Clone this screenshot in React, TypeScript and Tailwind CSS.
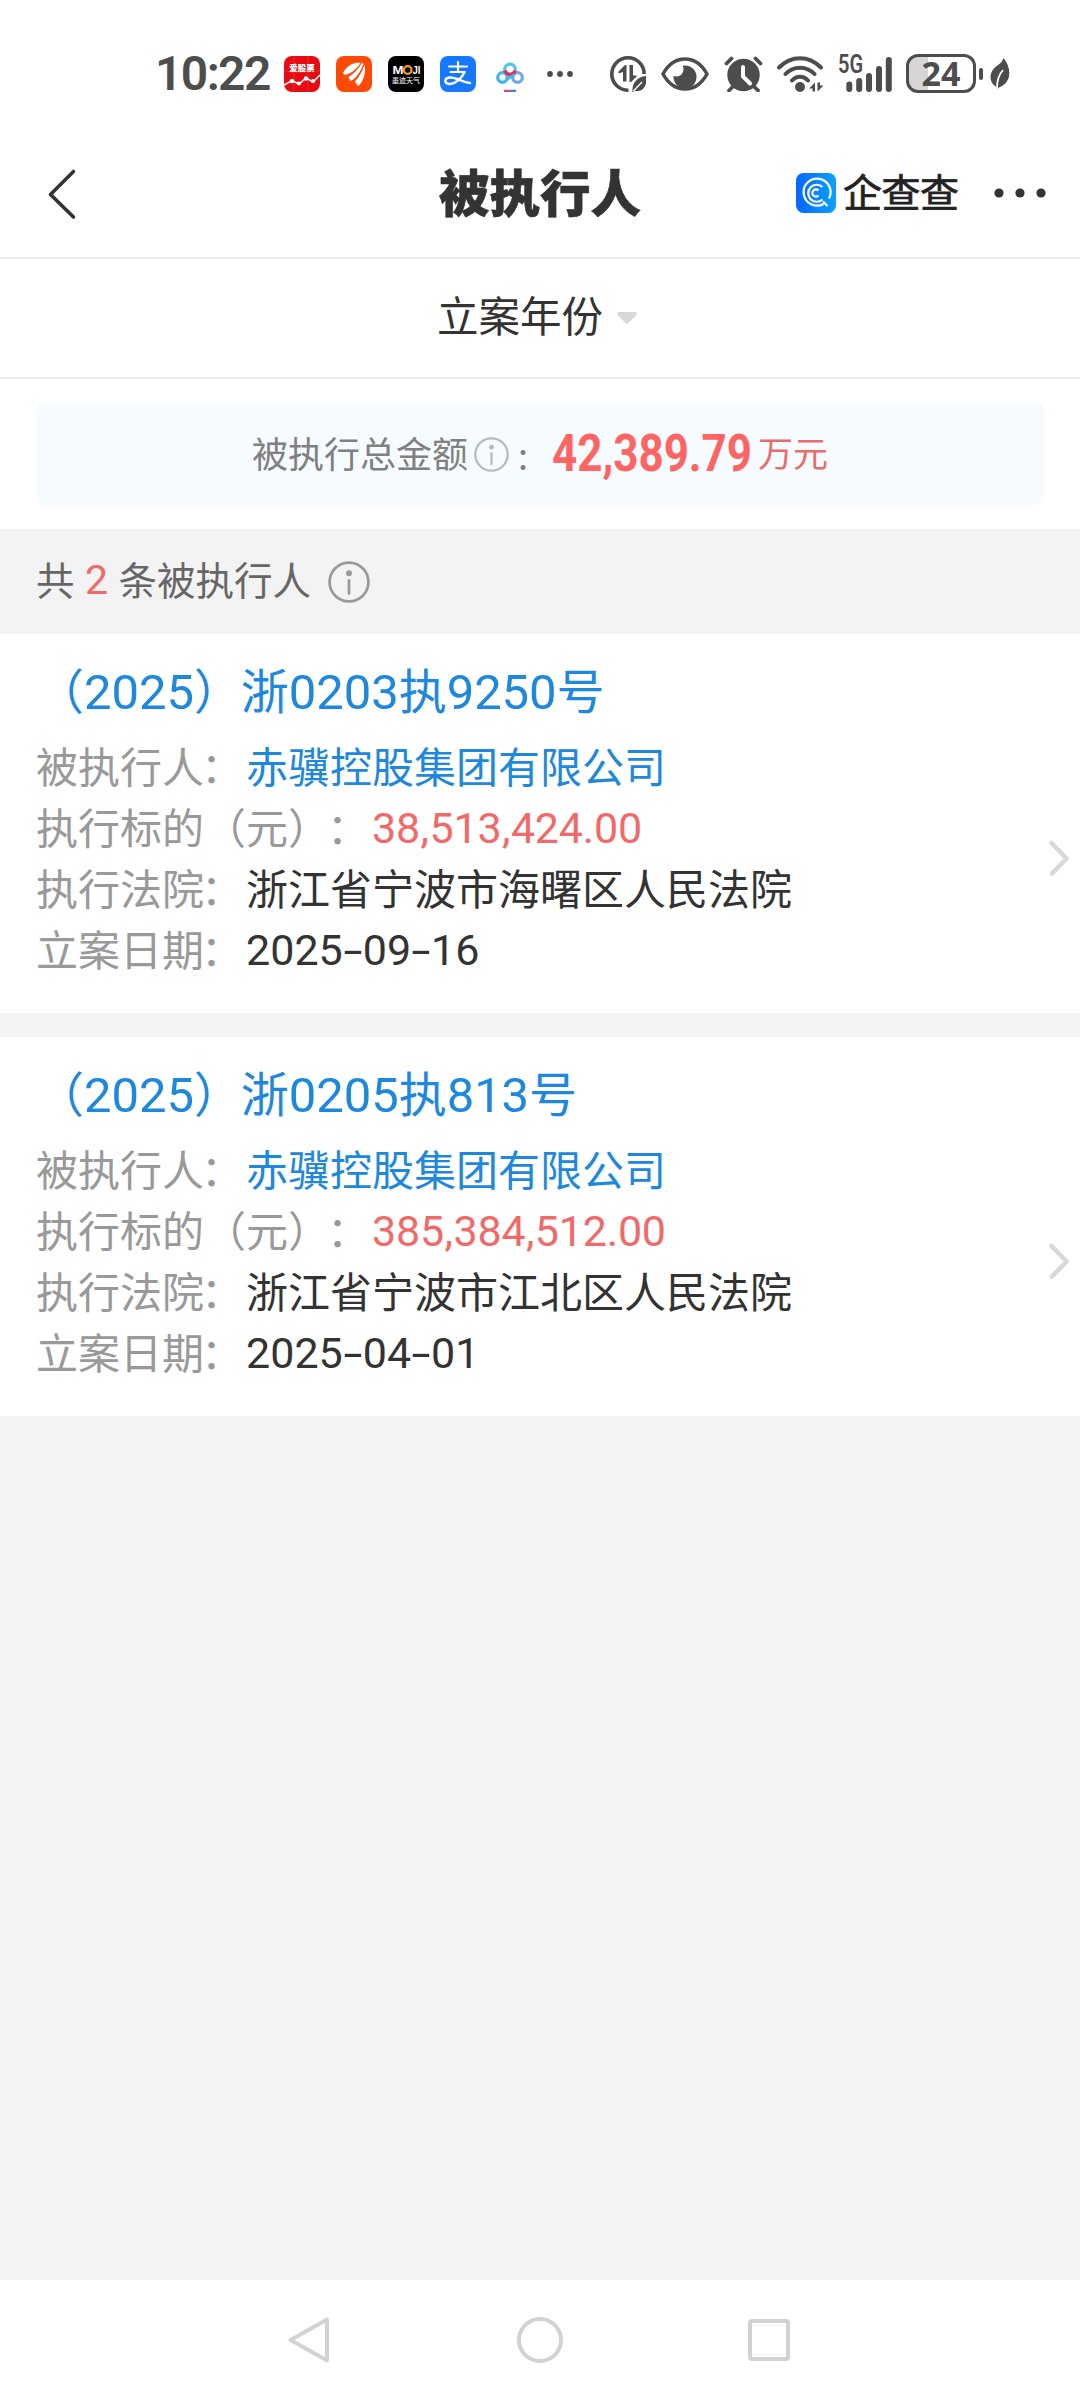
import React from "react";

const cjk = "font-['Noto_Sans_CJK_SC',sans-serif]";

/** Latin digits set in a narrower face, with wide date hyphens. */
function Digits({ value, className }: { value: string; className: string }) {
  return (
    <span className={`font-['Roboto',sans-serif] ${className}`}>
      {value.split("").map((c, i) =>
        c === "-" ? (
          <span key={i} className="inline-block w-[20px] scale-x-[1.6] text-center">-</span>
        ) : c === "," ? (
          <span key={i} className="inline-block w-[9.500px] text-center">,</span>
        ) : (
          <span key={i}>{c}</span>
        ),
      )}
    </span>
  );
}

function InfoIcon({ className, width }: { className: string; width: number }) {
  return (
    <svg viewBox="0 0 40 40" className={className} fill="none" stroke="currentColor" strokeWidth={width}>
      <circle cx="20" cy="20" r="18.5" />
      <circle cx="20" cy="11.7" r="2.8" fill="currentColor" stroke="none" />
      <path d="M20 18.5v12.5" strokeLinecap="round" />
    </svg>
  );
}

function StatusBar() {
  return (
    <div className="flex h-[131px] items-center pt-4 pl-[155px] text-[#4d4d4d]">
      <span className="w-[129px] font-['Roboto',sans-serif] text-[48px] leading-none font-semibold tracking-[-1.6px]">10:22</span>
      <div className="flex gap-4">
        <svg className="size-9" viewBox="0 0 36 36">
          <rect width="36" height="36" rx="8" fill="#e60c12" />
          <path d="M0 15h36M10 0v36M24 0v36" stroke="#f2444a" strokeWidth=".5" />
          <text x="18" y="15" textAnchor="middle" fontSize="8.5" fontWeight="900" fill="#fff" fontFamily="Noto Sans CJK SC">爱股票</text>
          <path d="M0 29l8-4.5 7 3.5 7-6 7 4 7-7" stroke="#fff" strokeWidth="1.5" fill="none" />
          <circle cx="8" cy="25" r="2.2" fill="#fff" /><circle cx="15" cy="27.5" r="2" fill="#fff" />
          <circle cx="22" cy="22.5" r="2.2" fill="#fff" /><circle cx="29" cy="25" r="2" fill="#fff" />
        </svg>
        <svg className="size-9" viewBox="0 0 36 36">
          <rect width="36" height="36" rx="8" fill="#fe4a05" />
          <g fill="#fff">
            <path d="M7 17C10 11 15 7 23 6.5l2 1.5C20 14 14 18 8.500 19Z" />
            <path d="M12.500 21C19 17 23 12 25.500 6.500l2 1.500C27 15 22 21.500 14.500 25Z" />
            <path d="M19 25.500C24 20 27 14 27.800 9l1 .8c1 7-1 15-6.300 20.200-1.500-1-2.500-2.500-3.500-4.500Z" />
          </g>
          <path d="M10.500 20.500C17 17 22 12 25.300 7M16.500 25.500C22 20.500 26 14 27.500 9" stroke="#fe4a05" strokeWidth="1.200" fill="none" />
        </svg>
        <svg className="size-9" viewBox="0 0 36 36">
          <rect width="36" height="36" rx="8" fill="#000" />
          <g fill="#fff" fontFamily="Liberation Sans" fontWeight="700">
            <text x="4.500" y="18" fontSize="11" textLength="11" lengthAdjust="spacingAndGlyphs">M</text>
            <text x="24.500" y="18" fontSize="11" textLength="8" lengthAdjust="spacingAndGlyphs">JI</text>
          </g>
          <circle cx="19.700" cy="14" r="3.800" fill="none" stroke="#f7931e" strokeWidth="2.300" />
          <text x="18" y="26.500" textAnchor="middle" fontSize="7" fill="#fff" fontFamily="Noto Sans CJK SC">墨迹天气</text>
        </svg>
        <svg className="size-9" viewBox="0 0 36 36" fill="none" stroke="#fff" strokeLinecap="round">
          <rect width="36" height="36" rx="8" fill="#1677ff" stroke="none" />
          <path d="M9 10.500h18M18 6v10M10.500 16h14" strokeWidth="2.200" />
          <path d="M24.500 16C22 22 15 28.500 9 28c-5-.5-5-6 .5-6.500C16 21 22 26 30 27" strokeWidth="2.400" />
        </svg>
        <svg className="size-9" viewBox="0 0 36 36" fill="none" strokeWidth="3.300">
          <circle cx="10.500" cy="21.500" r="4.800" stroke="#42b8e8" />
          <circle cx="25.500" cy="21.500" r="4.800" stroke="#6fa8ee" />
          <circle cx="18" cy="13.500" r="5.300" stroke="#55c4ee" />
          <path d="M12.900 14.500a5.300 5.300 0 0 0 10.200 0" stroke="#e0305f" />
          <path d="M14 24.500l8-6" stroke="#42b8e8" strokeWidth="2.500" />
          <path d="M12 35h6" stroke="#e0466e" strokeWidth="2.500" /><path d="M18 35h6" stroke="#3f83d6" strokeWidth="2.500" />
        </svg>
      </div>
      <svg className="ml-[18px] h-2 w-7" viewBox="0 0 28 8" fill="currentColor">
        <circle cx="4" cy="4" r="2.900" /><circle cx="14" cy="4" r="2.900" /><circle cx="24" cy="4" r="2.900" />
      </svg>
      <svg className="ml-9 size-9" viewBox="0 0 36 36">
        <path d="M34.200 18A16.200 16.200 0 1 0 18.500 34.200" fill="none" stroke="currentColor" strokeWidth="3.600" />
        <path d="M8.500 17.500v-2l6.500-6.500h1.500V25.500h-3.500V16ZM19.500 9h3.500v10.500h3.500v1L21 26h-1.500Z" fill="currentColor" />
        <path d="M36.500 20C37 29 34 35.500 26 35c-1.500 0-2 0-3.500 1.500-.8-9 4-15.500 14-16.500Z" fill="currentColor" />
        <path d="M23.500 35l8.500-9" stroke="#fff" strokeWidth="1.300" />
      </svg>
      <svg className="ml-[15px] h-9 w-12" viewBox="0 0 48 36">
        <circle cx="24" cy="21" r="11.500" fill="currentColor" />
        <circle cx="15.500" cy="13.500" r="7" fill="#fff" />
        <circle cx="20.500" cy="9" r="1.500" fill="#fff" />
        <path d="M2 18C13-2 35-2 46 18 35 38 13 38 2 18Z" fill="none" stroke="currentColor" strokeWidth="3.600" strokeLinejoin="round" />
      </svg>
      <svg className="ml-[15px] h-9 w-[39px]" viewBox="0 0 39 36">
        <circle cx="19.500" cy="19" r="16.200" fill="currentColor" />
        <path d="M2.500 7.500l5-5M36.500 7.500l-5-5M5 34.500l4-4M34 34.500l-4-4" stroke="currentColor" strokeWidth="3.800" strokeLinecap="round" />
        <path d="M19 11v9.500l7 7" fill="none" stroke="#fff" strokeWidth="4" strokeLinecap="round" />
      </svg>
      <svg className="ml-[14px] h-9 w-12" viewBox="0 0 48 36">
        <path d="M2 11.500C14-1 32-1 44 11.500M8.500 18c8-8.500 21-8.500 29 0M15 24.500c4.500-5 11.500-5 16 0" fill="none" stroke="currentColor" strokeWidth="4" strokeLinecap="round" />
        <circle cx="23" cy="31" r="5" fill="currentColor" />
        <path d="M38 26.500V35.500h-2.500V32.500h-3.500ZM40.500 35.500V26.500h2.500V29.500h3.500Z" fill="currentColor" />
      </svg>
      <div className="relative ml-[14px] h-9 w-[53px]">
        <svg className="h-9 w-[53px]" viewBox="0 0 53 36" stroke="currentColor" strokeWidth="6" strokeLinecap="round">
          <path d="M10.300 28.500V33M20.200 25V33M30 20V33M40 13V33M49.800 4V33" />
        </svg>
        <span className="absolute top-0 left-[-1px] origin-left scale-x-[0.800] font-['Roboto',sans-serif] text-[25px] leading-[18px] font-semibold">5G</span>
      </div>
      <div className="ml-[14px] flex h-[39px] w-[70px] items-center justify-center rounded-[12px] border-[3px] border-current bg-linear-to-r from-[#d6d6d6] from-30% to-white to-30% font-['Open_Sans',sans-serif] text-[34px] leading-none font-bold"><span className="-mt-[2px]">24</span></div>
      <div className="ml-[3px] h-3 w-1 rounded-full bg-current" />
      <svg className="ml-[7px] h-[31px] w-5" viewBox="0 0 20 31">
        <path d="M13.500 0C21 9 22 22 12 28c-2 1-3 1.500-4.500 2.500L5 28C-2.500 22 0 12 8 7c3-2 4.500-4 5.500-7Z" fill="currentColor" />
        <path d="M7 30c0-8 1.500-13 6-18" stroke="#fff" strokeWidth="1.800" fill="none" />
      </svg>
    </div>
  );
}

function Header() {
  return (
    <header className="relative flex h-[128px] items-center justify-center border-b-2 border-[#eeeeee] text-[#333]">
      <svg className="absolute top-[37px] left-[46px] h-[53px] w-8" viewBox="0 0 32 53" fill="none" stroke="currentColor" strokeWidth="3.600" strokeLinecap="round" strokeLinejoin="round">
        <path d="M27.500 3.500L4.500 26.500l23 22.500" />
      </svg>
      <h1 className="-mt-[7px] text-[50.500px] leading-none font-black [-webkit-text-stroke:0.6px]">被执行人</h1>
      <div className="absolute top-[42px] right-[34px] flex items-center">
        <svg className="size-10" viewBox="0 0 40 40" fill="none" stroke="#fff">
          <defs>
            <linearGradient id="brand" x1="0" x2="1"><stop stopColor="#0866ff" /><stop offset="1" stopColor="#0aa2ff" /></linearGradient>
          </defs>
          <rect width="40" height="40" rx="7.500" fill="url(#brand)" stroke="none" />
          <path d="M27.500 31A13.500 13.500 0 1 1 33 25.500M27 28.500l4.500 4.500" strokeWidth="2.200" />
          <path d="M26.500 14A8.500 8.500 0 1 0 26.500 26.500" strokeWidth="2.200" />
          <path d="M22.500 17.500a3.600 3.600 0 1 0 0 5" strokeWidth="2.200" />
        </svg>
        <span className="-mt-[6px] ml-[7px] w-[151px] text-[39px] leading-10 tracking-[-0.500px] text-[#222] [-webkit-text-stroke:0.7px]">企查查</span>
        <svg className="h-3 w-[52px]" viewBox="0 0 52 12" fill="currentColor">
          <circle cx="5" cy="6" r="4.600" /><circle cx="26" cy="6" r="4.600" /><circle cx="47" cy="6" r="4.600" />
        </svg>
      </div>
    </header>
  );
}

interface Case {
  title: [string, string, string];
  target: string;
  amount: string;
  court: string;
  date: string;
}

const cases: Case[] = [
  { title: ["2025", "0203", "9250"], target: "赤骥控股集团有限公司", amount: "38,513,424.00", court: "浙江省宁波市海曙区人民法院", date: "2025-09-16" },
  { title: ["2025", "0205", "813"], target: "赤骥控股集团有限公司", amount: "385,384,512.00", court: "浙江省宁波市江北区人民法院", date: "2025-04-01" },
];

function Row({ label, children }: { label: string; children: React.ReactNode }) {
  return (
    <div className="flex h-[61px] items-center leading-[61px] whitespace-nowrap">
      <span className="text-[#999]">{label}<span className="-ml-[3px] mr-[3px]">：</span></span>
      {children}
    </div>
  );
}

function CaseCard({ item }: { item: Case }) {
  const [year, court, no] = item.title;
  const titleDigits = "text-[49px] tracking-[-0.1px]";
  return (
    <article className="h-[379px] bg-white pr-[9px] pl-9 text-[42px]">
      <h2 className="h-[103px] pt-[24px] text-[48px] leading-[60px] whitespace-nowrap text-[#1e88dd]">
        （<Digits value={year} className={titleDigits} />）<span className="-ml-px">浙</span><Digits value={court} className={titleDigits} />执<Digits value={no} className={titleDigits} />号
      </h2>
      <div className="flex items-center justify-between">
        <div className="-mt-[3px] mb-[3px]">
          <Row label="被执行人"><span className="text-[#1e88dd]">{item.target}</span></Row>
          <Row label="执行标的（元）"><span className="pt-[2px] text-[#f06a6a]"><Digits value={item.amount} className="text-[43px] tracking-[-0.2px]" /></span></Row>
          <Row label="执行法院"><span className="text-[#333]">{item.court}</span></Row>
          <Row label="立案日期"><span className="pt-[2px] text-[#333]"><Digits value={item.date} className="text-[43px]" /></span></Row>
        </div>
        <svg className="h-10 w-6" viewBox="0 0 24 40" fill="none" stroke="#d9d9d9" strokeWidth="4.600" strokeLinecap="round" strokeLinejoin="round">
          <path d="M4.500 4L19.500 19.500l-14.500 15" />
        </svg>
      </div>
    </article>
  );
}

export default function App() {
  return (
    <div className={`flex h-[2400px] w-[1080px] flex-col overflow-hidden bg-[#f3f3f3] [text-spacing-trim:space-all] ${cjk}`} lang="zh-CN">
      <div className="bg-white">
        <StatusBar />
        <Header />
        <div className="flex h-[120px] items-center justify-center border-b-2 border-[#eeeeee] pr-[6px] text-[#333]">
          <span className="-mt-[6px] text-[41.500px] leading-none">立案年份</span>
          <svg className="ml-[14px] h-3 w-5" viewBox="0 0 20 12" fill="#d8d8d8"><path d="M2 0h16q3 1 1 3.500L11.500 11q-1.500 1.500-3 0L1 3.500Q-1 1 2 0Z" /></svg>
        </div>
        <div className="px-9 py-6">
          <div className="flex h-[102px] items-center rounded-lg bg-[#f5fbff] pl-[216px] text-[36px] leading-none text-[#808080]">
            <span className="-mt-[5px]">被执行总金额</span>
            <InfoIcon className="ml-[6px] size-[35px] text-[#b8bbbd]" width={2.6} />
            <span className="ml-[9px] w-[34px]">:</span>
            <span className="-mt-px w-[206px]">
              <span className="inline-block origin-left scale-x-[0.845] font-['Roboto',sans-serif] text-[52px] font-bold text-[#fd6464]">42,389.79</span>
            </span>
            <span className="-mt-[5px] text-[35px] text-[#e96c6c]">万元</span>
          </div>
        </div>
      </div>
      <div className="flex h-[105px] items-center pl-9 text-[38.500px] leading-none text-[#666]">
        <span className="-mt-[6px]">共</span>
        <span className="-mt-[3px] w-[44px] text-center font-['Roboto',sans-serif] text-[41px] text-[#f06a6a]">2</span>
        <span className="-mt-[6px]">条被执行人</span>
        <InfoIcon className="ml-[17px] size-[42px] text-[#999]" width={2.6} />
      </div>
      <main className="flex flex-col gap-6">
        {cases.map((c) => <CaseCard key={c.date} item={c} />)}
      </main>
      <nav className="mt-auto flex h-[120px] items-center bg-white pl-[286px] text-[#d2d2d2]">
        <svg className="h-12 w-[46px]" viewBox="0 0 46 48" fill="none" stroke="currentColor" strokeWidth="4" strokeLinejoin="round">
          <path d="M41 3.500V44.500L4.500 24Z" />
        </svg>
        <div className="ml-[185px] size-[46px] rounded-full border-4 border-current" />
        <div className="ml-[185px] size-[42px] rounded-[4px] border-4 border-current" />
      </nav>
    </div>
  );
}
